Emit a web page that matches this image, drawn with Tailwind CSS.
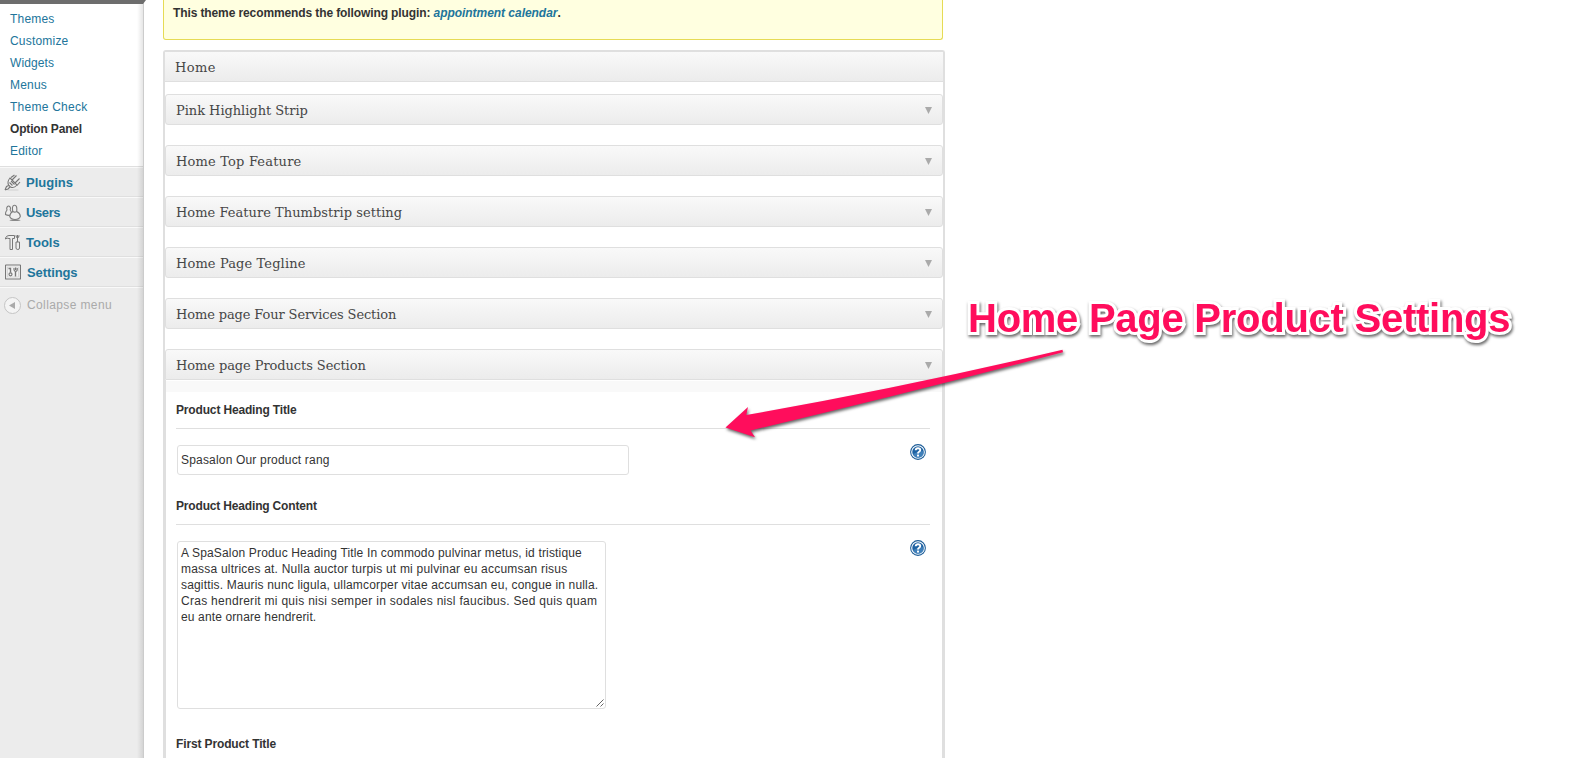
<!DOCTYPE html>
<html lang="en">
<head>
<meta charset="utf-8">
<title>Option Panel</title>
<script src="https://cdn.jsdelivr.net/npm/@tailwindcss/browser@4"></script>
</head>
<body class="relative flex h-[758px] w-[1575px] overflow-hidden bg-white font-['Liberation_Sans',Arial,sans-serif] text-xs text-[#333]">

<!-- Admin menu -->
<nav class="relative flex w-[144px] shrink-0 flex-col border-r border-[#ccc] bg-[#ececec]">
  <div class="h-1 w-[146px] shrink-0 bg-[#6d6d6d] [clip-path:polygon(0_0,100%_0,143px_100%,0_100%)]"></div>
  <ul class="flex h-[163px] flex-col border-b border-[#dfdfdf] bg-white pt-1 pl-2.5 leading-[22px] tracking-[0.2px] text-[#21759b]">
    <li>Themes</li>
    <li>Customize</li>
    <li class="tracking-[0.1px]">Widgets</li>
    <li>Menus</li>
    <li class="tracking-[0.25px]">Theme Check</li>
    <li class="font-bold tracking-[-0.17px] text-[#333]">Option Panel</li>
    <li>Editor</li>
  </ul>
  <ul class="text-[13px] font-bold leading-[29px] text-[#21759b]">
    <li class="flex h-[30px] border-t border-b border-t-[#f9f9f9] border-b-[#dfdfdf] pl-1">
      <svg class="mt-1.5 mr-[5px] h-[17px] w-[17px]" viewBox="0 0 17 17" fill="none" stroke="#777" stroke-width="1.1"><ellipse cx="9" cy="16" rx="6" ry=".6" fill="#d0d0d0" stroke="none"/><path d="M6 4 13 11Q10 14.500 6.500 13L4.500 11Q3 7.500 6 4Z" fill="#f3f3f3"/><path d="M8 6 12.500 1.500M11 9 15.500 4.500M7 3.500 10.500 1M13 11.500 16 8M4.800 11.500 2.500 12.500 1 16M6 13 4 15 1 16M7 7l3.500 3.500M5.500 8.500l3 3"/></svg>
      Plugins</li>
    <li class="flex h-[30px] border-t border-b border-t-[#f9f9f9] border-b-[#dfdfdf] pl-1 tracking-[-0.4px]">
      <svg class="mt-1.5 mr-[5px] h-[17px] w-[17px]" viewBox="0 0 17 17" fill="#efefef" stroke="#7c7c7c" stroke-width="1.100"><ellipse cx="11" cy="16.200" rx="5.500" ry=".7" fill="#888" stroke="none"/><path d="M3 6A1.900 2.600 0 1 1 6.200 6Q8 8 7.500 11 4 12 1.500 10.500 1.200 8 3 6Z"/><path d="M8.800 7.500Q7.600 1.500 10.500 1.300T12.700 7.500Q16.500 9.500 16.300 12.500 15 15.500 11 15.500 7 15.500 5.700 12.500 6 9 8.800 7.500Z"/><path d="M8.800 7.500Q10.800 8.800 12.700 7.500" fill="none"/></svg>
      Users</li>
    <li class="flex h-[30px] border-t border-b border-t-[#f9f9f9] border-b-[#dfdfdf] pl-1">
      <svg class="mt-1.5 mr-[5px] h-[17px] w-[17px]" viewBox="0 0 17 17" fill="#ededed" stroke="#777" stroke-width="1"><path d="M1.500 4Q2.500 1.500 5 1.500H10.500V4.500H8.500V15.500H6V4.500H5Q3 3.500 1.500 5Z"/><path d="M13.500 1V8M12 1.200Q12 4 13.500 4T15 1.200M12 8H15.500V14Q15.500 15.500 13.800 15.500T12 14Z"/></svg>
      Tools</li>
    <li class="flex h-[30px] border-t border-b border-t-[#f9f9f9] border-b-[#dfdfdf] pl-[5px] tracking-[-0.1px]">
      <svg class="mt-1.5 mr-1.5 h-4 w-4" viewBox="0 0 16 16" fill="none" stroke="#777"><rect x=".5" y="1" width="15" height="14" rx=".5" fill="#f4f4f4" stroke-width="1.200"/><rect x="2.500" y="3" width="11" height="10" stroke="#ccc" stroke-width=".7"/><path d="M3.500 4.500H6M5.500 4V8.500M10.500 8V12.500" stroke-width="1.400"/><circle cx="5.500" cy="10.300" r="1.500" stroke-width="1.200"/><path d="M9 4V5.500Q9 7.300 10.600 7.300T12.200 5.500V4M10.600 3.500V6" stroke-width="1.200"/></svg>
      Settings</li>
  </ul>
  <div class="flex items-center gap-[6px] border-t border-[#f9f9f9] pt-[9px] pl-1 leading-[17px] tracking-[0.38px] text-[#aaa]">
    <svg class="h-[17px] w-[17px]" viewBox="0 0 17 17"><circle cx="8.500" cy="8.500" r="8" fill="#f4f4f4" stroke="#c4c4c4"/><path d="M11 5V12L5 8.500Z" fill="#aaa"/></svg>
    Collapse menu
  </div>
  <div class="pointer-events-none absolute top-1 right-0 bottom-0 w-1.5 bg-linear-to-r from-black/0 to-black/10"></div>
</nav>

<!-- Option panel -->
<main class="ml-[19px] flex w-[782px] flex-col">
  <div class="h-10 w-[780px] shrink-0 rounded-b-[3px] border border-t-0 border-[#e6db55] bg-[#ffffe0] pt-[5px] pl-[9px] font-bold leading-4 tracking-[-0.11px]">This theme recommends the following plugin: <em class="tracking-[-0.04px] text-[#21759b]">appointment calendar</em>.</div>

  <div class="mt-2.5 flex h-[720px] shrink-0 flex-col rounded-t-[3px] border-2 border-b-0 border-[#dfdfdf] font-['DejaVu_Serif',serif] text-[13px] leading-[29px] text-[#464646]">
    <h2 class="h-[30px] shrink-0 border-b border-[#dfdfdf] bg-linear-to-b from-[#f9f9f9] to-[#ececec] pl-2.5 leading-[31px] tracking-[0.4px]">Home</h2>
    <div class="mt-3 flex shrink-0 flex-col gap-5">
      <h3 class="flex h-[31px] items-center justify-between rounded-[3px] border border-[#dfdfdf] bg-linear-to-b from-[#f9f9f9] to-[#ececec] pt-px pr-2.5 pl-2.5 tracking-[-0.04px]">Pink Highlight Strip <svg class="h-[7px] w-[7px]" viewBox="0 0 7 7"><path d="M0 0H7L3.500 7Z" fill="#aaa"/></svg></h3>
      <h3 class="flex h-[31px] items-center justify-between rounded-[3px] border border-[#dfdfdf] bg-linear-to-b from-[#f9f9f9] to-[#ececec] pt-px pr-2.5 pl-2.5 tracking-[0.18px]">Home Top Feature <svg class="h-[7px] w-[7px]" viewBox="0 0 7 7"><path d="M0 0H7L3.500 7Z" fill="#aaa"/></svg></h3>
      <h3 class="flex h-[31px] items-center justify-between rounded-[3px] border border-[#dfdfdf] bg-linear-to-b from-[#f9f9f9] to-[#ececec] pt-px pr-2.5 pl-2.5 tracking-[0.03px]">Home Feature Thumbstrip setting <svg class="h-[7px] w-[7px]" viewBox="0 0 7 7"><path d="M0 0H7L3.500 7Z" fill="#aaa"/></svg></h3>
      <h3 class="flex h-[31px] items-center justify-between rounded-[3px] border border-[#dfdfdf] bg-linear-to-b from-[#f9f9f9] to-[#ececec] pt-px pr-2.5 pl-2.5 tracking-[0.12px]">Home Page Tegline <svg class="h-[7px] w-[7px]" viewBox="0 0 7 7"><path d="M0 0H7L3.500 7Z" fill="#aaa"/></svg></h3>
      <h3 class="flex h-[31px] items-center justify-between rounded-[3px] border border-[#dfdfdf] bg-linear-to-b from-[#f9f9f9] to-[#ececec] pt-px pr-2.5 pl-2.5 tracking-[-0.12px]">Home page Four Services Section <svg class="h-[7px] w-[7px]" viewBox="0 0 7 7"><path d="M0 0H7L3.500 7Z" fill="#aaa"/></svg></h3>
      <h3 class="flex h-[31px] items-center justify-between rounded-t-[3px] border border-[#dfdfdf] bg-linear-to-b from-[#f9f9f9] to-[#ececec] pt-px pr-2.5 pl-2.5 tracking-[-0.08px]">Home page Products Section <svg class="h-[7px] w-[7px]" viewBox="0 0 7 7"><path d="M0 0H7L3.500 7Z" fill="#aaa"/></svg></h3>
    </div>
    <section class="flex-1 border-x border-[#dfdfdf] pt-px font-['Liberation_Sans',Arial,sans-serif] text-xs leading-4 tracking-normal text-[#333]">
      <div class="h-[11px] bg-[#f9f9f9]"></div>
      <div class="mr-3 ml-2.5 flex flex-col">
        <h4 class="h-[37px] border-b border-[#dfdfdf] pt-2.5 font-bold tracking-[-0.16px]">Product Heading Title</h4>
        <div class="flex h-[63px] items-start justify-between pt-4 pr-1 pl-px">
          <div class="h-[30px] w-[452px] rounded-[3px] border border-[#dfdfdf] pl-[3px] leading-[28px] tracking-[0.18px]">Spasalon Our product rang</div>
          <svg class="-mt-px h-4 w-4" viewBox="0 0 16 16"><circle cx="8" cy="8" r="7.900" fill="#1b5c97"/><circle cx="8" cy="8" r="6.300" fill="#1d62a3" stroke="#fff" stroke-width="1.100"/><path d="M3 10Q8 7 13.500 7A5.500 5.500 0 0 1 4 12Z" fill="#4f8cc2" opacity=".7"/><path d="M5.700 6.200Q5.800 4.200 8 4.200T10.300 6Q10.300 7.200 8.800 8 8 8.500 8 9.400" fill="none" stroke="#fff" stroke-width="1.900"/><rect x="7" y="10.600" width="2" height="1.900" fill="#fff"/></svg>
        </div>
        <h4 class="h-[33px] border-b border-[#dfdfdf] pt-[6px] font-bold tracking-[-0.17px]">Product Heading Content</h4>
        <div class="flex h-[200px] items-start justify-between pt-4 pr-1 pl-px">
          <div class="relative h-[168px] w-[429px] whitespace-nowrap rounded-[3px] border border-[#dfdfdf] pt-[3px] pl-[3px]">
            <div class="tracking-[0.16px]">A SpaSalon Produc Heading Title In commodo pulvinar metus, id tristique</div>
            <div class="tracking-[0.21px]">massa ultrices at. Nulla auctor turpis ut mi pulvinar eu accumsan risus</div>
            <div class="tracking-[0.17px]">sagittis. Mauris nunc ligula, ullamcorper vitae accumsan eu, congue in nulla.</div>
            <div class="tracking-[0.28px]">Cras hendrerit mi quis nisi semper in sodales nisl faucibus. Sed quis quam</div>
            <div class="tracking-[0.13px]">eu ante ornare hendrerit.</div>
            <svg class="absolute right-px bottom-px h-2 w-2" viewBox="0 0 8 8" stroke="#555" stroke-width=".9"><path d="M.5 7.500 7.500.500M4.500 7.500 7.500 4.500"/></svg>
          </div>
          <svg class="-mt-px h-4 w-4" viewBox="0 0 16 16"><circle cx="8" cy="8" r="7.900" fill="#1b5c97"/><circle cx="8" cy="8" r="6.300" fill="#1d62a3" stroke="#fff" stroke-width="1.100"/><path d="M3 10Q8 7 13.500 7A5.500 5.500 0 0 1 4 12Z" fill="#4f8cc2" opacity=".7"/><path d="M5.700 6.200Q5.800 4.200 8 4.200T10.300 6Q10.300 7.200 8.800 8 8 8.500 8 9.400" fill="none" stroke="#fff" stroke-width="1.900"/><rect x="7" y="10.600" width="2" height="1.900" fill="#fff"/></svg>
        </div>
        <h4 class="pt-[11px] font-bold tracking-[-0.13px]">First Product Title</h4>
      </div>
    </section>
  </div>
</main>

<!-- Callout laid over the page -->
<div class="absolute top-[295px] left-[968px] whitespace-nowrap text-[40px] leading-[46px] font-bold tracking-[-0.26px] text-[#ff0d5c] [-webkit-text-stroke:6px_white] [paint-order:stroke_fill] [stroke-linejoin:round] [filter:drop-shadow(1px_2px_1.5px_rgb(0_0_0/0.6))]">Home Page Product Settings</div>
<svg class="absolute top-[340px] left-[715px] h-[110px] w-[360px] [filter:drop-shadow(1px_2px_1.5px_rgb(0_0_0/0.6))]" viewBox="715 340 360 110" fill="#ff0d5c"><path d="M725.500 427.500 748 407 746.300 415Q900 388 1062.500 349.800L1063 352.300Q905 394 750.500 430.500L755 437.300Z"/></svg>
</body>
</html>
